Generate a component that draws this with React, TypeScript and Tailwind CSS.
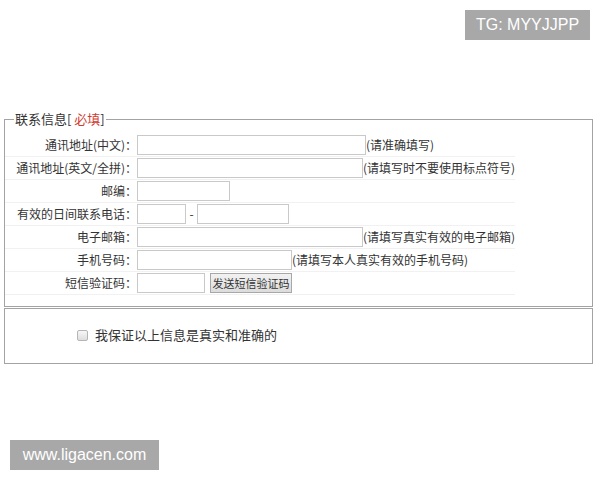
import React from 'react'

const font = { fontFamily: '"Noto Sans CJK SC", "Liberation Sans", sans-serif' }

type Row = {
  label: string
  hint?: string
  kind: 'wide' | 'short' | 'phone' | 'mobile' | 'sms'
}

const ROWS: Row[] = [
  { label: '通讯地址(中文)：', kind: 'wide', hint: '(请准确填写)' },
  { label: '通讯地址(英文/全拼)：', kind: 'wide', hint: '(请填写时不要使用标点符号)' },
  { label: '邮编：', kind: 'short' },
  { label: '有效的日间联系电话：', kind: 'phone' },
  { label: '电子邮箱：', kind: 'wide', hint: '(请填写真实有效的电子邮箱)' },
  { label: '手机号码：', kind: 'mobile', hint: '(请填写本人真实有效的手机号码)' },
  { label: '短信验证码：', kind: 'sms' },
]

const inputCls = 'h-[20px] border border-[#c9c9c9] bg-white outline-none'

function Field({ row }: { row: Row }) {
  switch (row.kind) {
    case 'wide':
      return <input className={`${inputCls} w-[229px]`} />
    case 'short':
      return <input className={`${inputCls} w-[93px]`} />
    case 'mobile':
      return <input className={`${inputCls} w-[155px]`} />
    case 'phone':
      return (
        <div className="flex items-center">
          <input className={`${inputCls} w-[49px]`} />
          <span className="w-[11px] text-center">-</span>
          <input className={`${inputCls} w-[92px]`} />
        </div>
      )
    case 'sms':
      return (
        <div className="flex items-center gap-[5px]">
          <input className={`${inputCls} w-[68px]`} />
          <button className="h-[20px] px-0 w-[82px] whitespace-nowrap border border-[#a8a8a8] bg-gradient-to-b from-[#f2f2f2] to-[#dcdcdc] text-[11px] text-[#333] leading-none">
            发送短信验证码
          </button>
        </div>
      )
  }
}

export default function App() {
  return (
    <div className="relative w-[600px] h-[480px] bg-white text-[#333] text-[12px]" style={font}>
      {/* watermarks */}
      <div
        className="absolute right-[10px] top-[10px] h-[30px] w-[125px] bg-[#a8a8a8] text-white text-[16px] flex items-center justify-center"
        style={{ fontFamily: '"Liberation Sans", Arial, sans-serif' }}
      >
        TG: MYYJJPP
      </div>

      <div className="pt-[112px] px-[4px] w-[597px]">
        <fieldset className="border border-[#a3a3a3] pb-[11px]">
          <legend className="ml-[9px] px-[1px] text-[13px] leading-[14px] text-[#333]">
            联系信息[ <span className="text-[#d03a2f]">必填</span>]
          </legend>
          <div className="flex flex-col pt-[8px]">
            {ROWS.map(row => (
              <div
                key={row.label}
                className="flex items-center h-[23px] w-[510px] border-b border-[#f1f1f1]"
              >
                <div className="w-[132px] shrink-0 flex justify-end whitespace-nowrap">
                  {row.label}
                </div>
                <Field row={row} />
                {row.hint && <span className="whitespace-nowrap">{row.hint}</span>}
              </div>
            ))}
          </div>
        </fieldset>

        <div className="mt-[1px] h-[56px] border border-[#a3a3a3] flex items-center pl-[72px] pb-[2px]">
          <span className="w-[11px] h-[11px] rounded-[2px] border border-[#b5b5b5] bg-gradient-to-b from-[#f7f7f7] to-[#dedede]" />
          <span className="ml-[7px] text-[13px]">我保证以上信息是真实和准确的</span>
        </div>
      </div>

      <div
        className="absolute left-[10px] top-[440px] h-[30px] w-[149px] bg-[#a8a8a8] text-white text-[16px] flex items-center justify-center"
        style={{ fontFamily: '"Liberation Sans", Arial, sans-serif' }}
      >
        www.ligacen.com
      </div>
    </div>
  )
}
